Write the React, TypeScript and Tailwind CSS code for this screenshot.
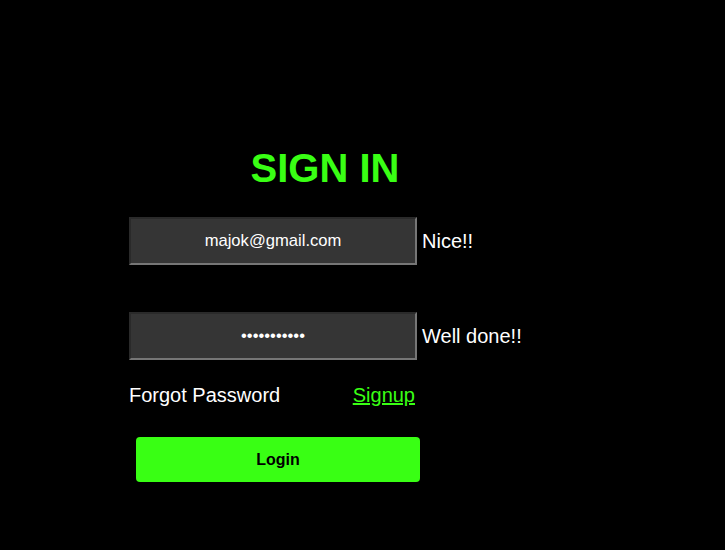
export default function App() {
  const inputCls =
    "w-[288px] h-[48px] shrink-0 bg-[#353535] border-2 border-t-[#2a2a2a] border-l-[#2a2a2a] border-b-[#767676] border-r-[#767676] text-center text-white text-[16.6px] outline-none";

  return (
    <div
      className="min-h-[550px] bg-black pt-[145px] pl-[129px]"
      style={{ fontFamily: '"Liberation Sans", Arial, sans-serif' }}
    >
      <div className="w-[392px]">
        <h1 className="text-center text-[40px] font-bold leading-[46px] text-[#39ff14]">SIGN IN</h1>

        <div className="mt-[26px] flex items-center gap-[5px]">
          <input className={inputCls} type="email" value="majok@gmail.com" readOnly />
          <span className="whitespace-nowrap text-[20px] text-white">Nice!!</span>
        </div>

        <div className="mt-[47px] flex items-center gap-[5px]">
          <input className={inputCls} type="password" value="12345678901" readOnly />
          <span className="whitespace-nowrap text-[20px] text-white">Well done!!</span>
        </div>

        <div className="mt-[24px] flex w-[286px] justify-between text-[20px] leading-[23px]">
          <span className="text-white">Forgot Password</span>
          <a href="#signup" className="text-[#39ff14] underline">
            Signup
          </a>
        </div>

        <button className="mt-[30px] ml-[7px] h-[45px] w-[284px] rounded-[4px] bg-[#39ff14] text-[16px] font-bold text-black">
          Login
        </button>
      </div>
    </div>
  );
}
